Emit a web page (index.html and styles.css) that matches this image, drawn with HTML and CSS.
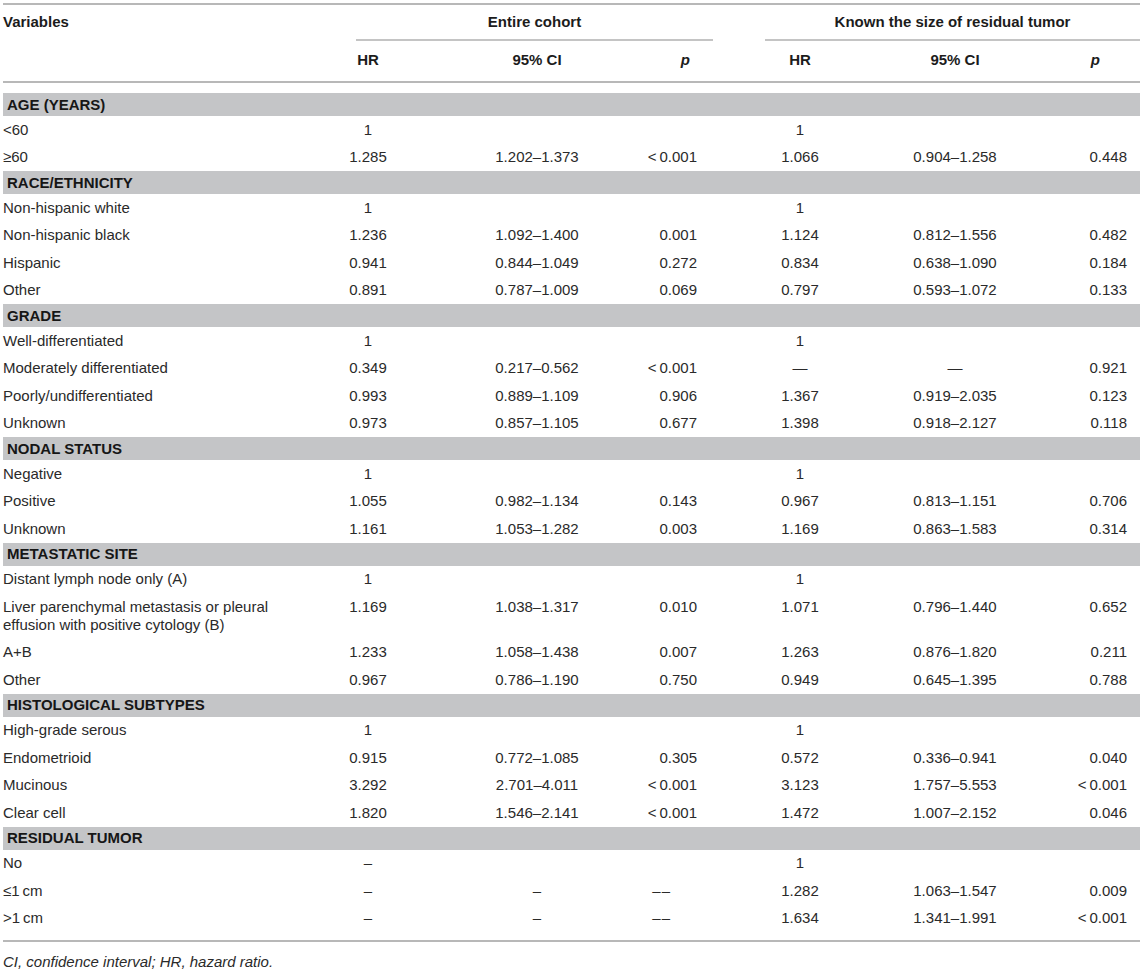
FILE: index.html
```html
<!DOCTYPE html>
<html lang="en">
<head>
<meta charset="utf-8">
<title>Cox regression table</title>
<link rel="stylesheet" href="styles.css">
</head>
<body>
<div class="wrap">
  <div class="table-box">
    <table class="data">
      <colgroup>
        <col class="c-var">
        <col class="c-hr1">
        <col class="c-ci1">
        <col class="c-p1">
        <col class="c-gap">
        <col class="c-hr2">
        <col class="c-ci2">
        <col class="c-p2">
      </colgroup>
      <thead>
        <tr>
          <th class="h-var" rowspan="2">Variables</th>
          <th class="h-group" colspan="3"><div class="group-label indent">Entire cohort</div></th>
          <th class="h-blank"></th>
          <th class="h-group" colspan="3"><div class="group-label">Known the size of residual tumor</div></th>
        </tr>
        <tr class="sub">
          <th class="num">HR</th>
          <th class="num ci1">95% CI</th>
          <th class="pv p1"><i>p</i></th>
          <th></th>
          <th class="num">HR</th>
          <th class="num">95% CI</th>
          <th class="pv p2"><i>p</i></th>
        </tr>
      </thead>
      <tbody>
        <tr class="gap-row"><td colspan="8"></td></tr>

        <tr class="band"><td colspan="8">AGE (YEARS)</td></tr>
        <tr><td>&lt;60</td><td class="num">1</td><td class="num ci1"></td><td class="pv p1"></td><td></td><td class="num">1</td><td class="num"></td><td class="pv p2"></td></tr>
        <tr><td>&ge;60</td><td class="num">1.285</td><td class="num ci1">1.202–1.373</td><td class="pv p1">&lt;&thinsp;0.001</td><td></td><td class="num">1.066</td><td class="num">0.904–1.258</td><td class="pv p2">0.448</td></tr>

        <tr class="band"><td colspan="8">RACE/ETHNICITY</td></tr>
        <tr><td>Non-hispanic white</td><td class="num">1</td><td class="num ci1"></td><td class="pv p1"></td><td></td><td class="num">1</td><td class="num"></td><td class="pv p2"></td></tr>
        <tr><td>Non-hispanic black</td><td class="num">1.236</td><td class="num ci1">1.092–1.400</td><td class="pv p1">0.001</td><td></td><td class="num">1.124</td><td class="num">0.812–1.556</td><td class="pv p2">0.482</td></tr>
        <tr><td>Hispanic</td><td class="num">0.941</td><td class="num ci1">0.844–1.049</td><td class="pv p1">0.272</td><td></td><td class="num">0.834</td><td class="num">0.638–1.090</td><td class="pv p2">0.184</td></tr>
        <tr><td>Other</td><td class="num">0.891</td><td class="num ci1">0.787–1.009</td><td class="pv p1">0.069</td><td></td><td class="num">0.797</td><td class="num">0.593–1.072</td><td class="pv p2">0.133</td></tr>

        <tr class="band"><td colspan="8">GRADE</td></tr>
        <tr><td>Well-differentiated</td><td class="num">1</td><td class="num ci1"></td><td class="pv p1"></td><td></td><td class="num">1</td><td class="num"></td><td class="pv p2"></td></tr>
        <tr><td>Moderately differentiated</td><td class="num">0.349</td><td class="num ci1">0.217–0.562</td><td class="pv p1">&lt;&thinsp;0.001</td><td></td><td class="num">—</td><td class="num">—</td><td class="pv p2">0.921</td></tr>
        <tr><td>Poorly/undifferentiated</td><td class="num">0.993</td><td class="num ci1">0.889–1.109</td><td class="pv p1">0.906</td><td></td><td class="num">1.367</td><td class="num">0.919–2.035</td><td class="pv p2">0.123</td></tr>
        <tr><td>Unknown</td><td class="num">0.973</td><td class="num ci1">0.857–1.105</td><td class="pv p1">0.677</td><td></td><td class="num">1.398</td><td class="num">0.918–2.127</td><td class="pv p2">0.118</td></tr>

        <tr class="band"><td colspan="8">NODAL STATUS</td></tr>
        <tr><td>Negative</td><td class="num">1</td><td class="num ci1"></td><td class="pv p1"></td><td></td><td class="num">1</td><td class="num"></td><td class="pv p2"></td></tr>
        <tr><td>Positive</td><td class="num">1.055</td><td class="num ci1">0.982–1.134</td><td class="pv p1">0.143</td><td></td><td class="num">0.967</td><td class="num">0.813–1.151</td><td class="pv p2">0.706</td></tr>
        <tr><td>Unknown</td><td class="num">1.161</td><td class="num ci1">1.053–1.282</td><td class="pv p1">0.003</td><td></td><td class="num">1.169</td><td class="num">0.863–1.583</td><td class="pv p2">0.314</td></tr>

        <tr class="band"><td colspan="8">METASTATIC SITE</td></tr>
        <tr><td>Distant lymph node only (A)</td><td class="num">1</td><td class="num ci1"></td><td class="pv p1"></td><td></td><td class="num">1</td><td class="num"></td><td class="pv p2"></td></tr>
        <tr><td>Liver parenchymal metastasis or pleural effusion with positive cytology (B)</td><td class="num">1.169</td><td class="num ci1">1.038–1.317</td><td class="pv p1">0.010</td><td></td><td class="num">1.071</td><td class="num">0.796–1.440</td><td class="pv p2">0.652</td></tr>
        <tr><td>A+B</td><td class="num">1.233</td><td class="num ci1">1.058–1.438</td><td class="pv p1">0.007</td><td></td><td class="num">1.263</td><td class="num">0.876–1.820</td><td class="pv p2">0.211</td></tr>
        <tr><td>Other</td><td class="num">0.967</td><td class="num ci1">0.786–1.190</td><td class="pv p1">0.750</td><td></td><td class="num">0.949</td><td class="num">0.645–1.395</td><td class="pv p2">0.788</td></tr>

        <tr class="band"><td colspan="8">HISTOLOGICAL SUBTYPES</td></tr>
        <tr><td>High-grade serous</td><td class="num">1</td><td class="num ci1"></td><td class="pv p1"></td><td></td><td class="num">1</td><td class="num"></td><td class="pv p2"></td></tr>
        <tr><td>Endometrioid</td><td class="num">0.915</td><td class="num ci1">0.772–1.085</td><td class="pv p1">0.305</td><td></td><td class="num">0.572</td><td class="num">0.336–0.941</td><td class="pv p2">0.040</td></tr>
        <tr><td>Mucinous</td><td class="num">3.292</td><td class="num ci1">2.701–4.011</td><td class="pv p1">&lt;&thinsp;0.001</td><td></td><td class="num">3.123</td><td class="num">1.757–5.553</td><td class="pv p2">&lt;&thinsp;0.001</td></tr>
        <tr><td>Clear cell</td><td class="num">1.820</td><td class="num ci1">1.546–2.141</td><td class="pv p1">&lt;&thinsp;0.001</td><td></td><td class="num">1.472</td><td class="num">1.007–2.152</td><td class="pv p2">0.046</td></tr>

        <tr class="band"><td colspan="8">RESIDUAL TUMOR</td></tr>
        <tr><td>No</td><td class="num">–</td><td class="num ci1"></td><td class="pv p1"></td><td></td><td class="num">1</td><td class="num"></td><td class="pv p2"></td></tr>
        <tr><td>&le;1&thinsp;cm</td><td class="num">–</td><td class="num ci1">–</td><td class="pv p1 dash">––</td><td></td><td class="num">1.282</td><td class="num">1.063–1.547</td><td class="pv p2">0.009</td></tr>
        <tr><td>&gt;1&thinsp;cm</td><td class="num">–</td><td class="num ci1">–</td><td class="pv p1 dash">––</td><td></td><td class="num">1.634</td><td class="num">1.341–1.991</td><td class="pv p2">&lt;&thinsp;0.001</td></tr>
      </tbody>
    </table>
  </div>
  <p class="footnote">CI, confidence interval; HR, hazard ratio.</p>
</div>
</body>
</html>
```

FILE: styles.css
```css
html, body {
  margin: 0;
  padding: 0;
  background: #ffffff;
}

body {
  font-family: "Liberation Sans", Arial, Helvetica, sans-serif;
  font-size: 15px;
  line-height: 18px;
  color: #2a2a2a;
}

.wrap {
  padding: 3px 0 0 3px;
}

.table-box {
  width: 1137px;
  border-top: 2px solid #b8b8b8;
  border-bottom: 2px solid #b8b8b8;
  padding-bottom: 8px;
}

.data {
  width: 1137px;
  table-layout: fixed;
  border-collapse: separate;
  border-spacing: 0;
}

.c-var { width: 315px; }
.c-hr1 { width: 100px; }
.c-ci1 { width: 202px; }
.c-p1  { width: 93px; }
.c-gap { width: 52px; }
.c-hr2 { width: 70px; }
.c-ci2 { width: 240px; }
.c-p2  { width: 65px; }

.data th {
  font-weight: bold;
  color: #1c1c1c;
  padding: 0;
  white-space: nowrap;
}

.data th.h-var {
  text-align: left;
  vertical-align: top;
  padding-top: 8px;
  border-bottom: 2px solid #b8b8b8;
}

.h-group {
  vertical-align: bottom;
}

.group-label {
  padding: 8px 0 8px 0;
  text-align: center;
  border-bottom: 2px solid #c4c4c4;
}

.group-label.indent {
  margin-left: 38px;
}

.data .sub th {
  padding: 10px 0 12px 0;
  border-bottom: 2px solid #b8b8b8;
}

.sub th.num {
  text-align: center;
}

.data .sub th.ci1 {
  padding-left: 36px;
}

.data .sub th.p1 {
  text-align: right;
  padding-right: 23px;
}

.data .sub th.p2 {
  text-align: right;
  padding-right: 40px;
}

.data td {
  padding: 4.75px 0;
  vertical-align: top;
}

.data .gap-row td {
  height: 10px;
  padding: 0;
  line-height: 0;
  font-size: 0;
}

.data .band td {
  background: #c4c5c7;
  font-weight: bold;
  color: #161616;
  padding: 2.5px 0 2.5px 4px;
}

.data td.num {
  text-align: center;
  white-space: nowrap;
}

.data td.ci1 {
  padding-left: 36px;
}

.data td.pv {
  text-align: right;
  white-space: nowrap;
}

.data td.p1 {
  padding-right: 16px;
}

.data td.p2 {
  padding-right: 13px;
}

.data td.dash {
  padding-right: 42px;
  letter-spacing: 1px;
}

.footnote {
  margin: 11px 0 0 0;
  font-style: italic;
  color: #2a2a2a;
}
```
